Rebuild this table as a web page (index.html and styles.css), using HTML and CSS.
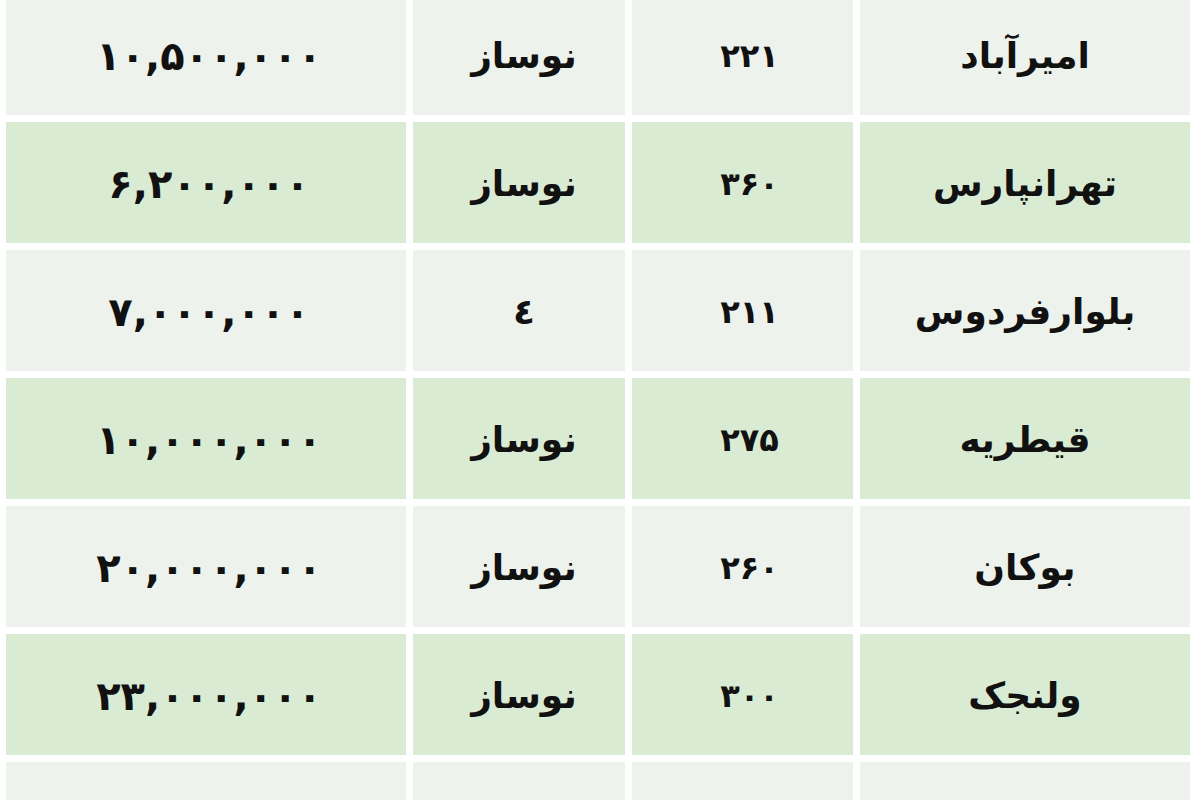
FILE: index.html
```html
<!DOCTYPE html>
<html lang="fa" dir="rtl">
<head>
<meta charset="utf-8">
<title>جدول قیمت</title>
<link rel="stylesheet" href="styles.css">
</head>
<body>
<div class="table">
  <div class="row gray"><div class="cell name">امیرآباد</div><div class="cell area">۲۲۱</div><div class="cell age">نوساز</div><div class="cell price">۱۰,۵۰۰,۰۰۰</div></div>
  <div class="row green"><div class="cell name">تهرانپارس</div><div class="cell area">۳۶۰</div><div class="cell age">نوساز</div><div class="cell price">۶,۲۰۰,۰۰۰</div></div>
  <div class="row gray"><div class="cell name">بلوارفردوس</div><div class="cell area">۲۱۱</div><div class="cell age">٤</div><div class="cell price">۷,۰۰۰,۰۰۰</div></div>
  <div class="row green"><div class="cell name">قیطریه</div><div class="cell area">۲۷۵</div><div class="cell age">نوساز</div><div class="cell price">۱۰,۰۰۰,۰۰۰</div></div>
  <div class="row gray"><div class="cell name">بوکان</div><div class="cell area">۲۶۰</div><div class="cell age">نوساز</div><div class="cell price">۲۰,۰۰۰,۰۰۰</div></div>
  <div class="row green"><div class="cell name">ولنجک</div><div class="cell area">۳۰۰</div><div class="cell age">نوساز</div><div class="cell price">۲۳,۰۰۰,۰۰۰</div></div>
  <div class="row gray"><div class="cell name"></div><div class="cell area"></div><div class="cell age"></div><div class="cell price"></div></div>
</div>
</body>
</html>
```

FILE: styles.css
```css
html, body {
  margin: 0;
  padding: 0;
  background: #ffffff;
  overflow: hidden;
}

body {
  height: 800px;
  font-family: "DejaVu Sans", sans-serif;
  color: #111111;
}

.table {
  display: flex;
  flex-direction: column;
  gap: 7px;
  width: 1184px;
  margin-top: -6px;
  margin-right: 10px;
}

.row {
  display: grid;
  grid-template-columns: 330px 221px 212px 400px;
  column-gap: 7px;
  height: 121px;
}

.cell {
  display: flex;
  align-items: center;
  justify-content: center;
  font-weight: bold;
  font-size: 33px;
  padding-top: 2px;
  box-sizing: border-box;
}

.gray .cell {
  background: #eef2ed;
}

.green .cell {
  background: #d9ecd3;
}

.name {
  font-size: 36px;
}

.area {
  font-size: 32px;
  padding-left: 14px;
}

.age {
  font-size: 36px;
  padding-left: 10px;
}

.price {
  direction: ltr;
  font-size: 40px;
  letter-spacing: 2px;
  padding-left: 6px;
}
```
